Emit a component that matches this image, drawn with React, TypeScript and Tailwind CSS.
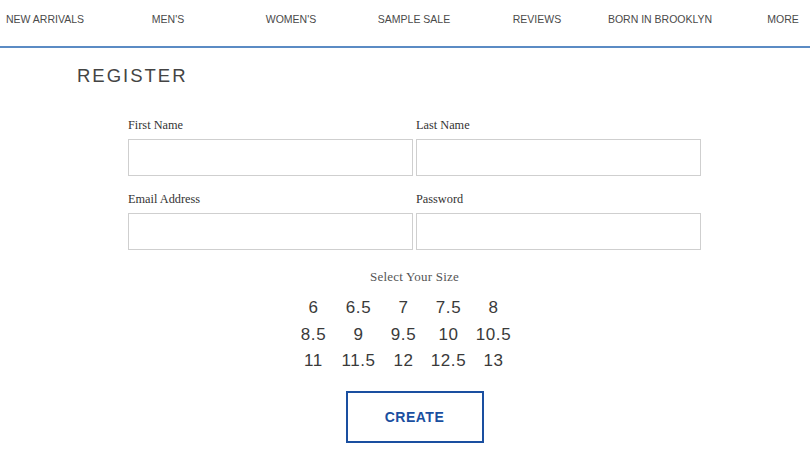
import React from 'react';

const navItems = ['NEW ARRIVALS', "MEN'S", "WOMEN'S", 'SAMPLE SALE', 'REVIEWS', 'BORN IN BROOKLYN', 'MORE'];

const sizes = ['6', '6.5', '7', '7.5', '8', '8.5', '9', '9.5', '10', '10.5', '11', '11.5', '12', '12.5', '13'];

const Field: React.FC<{ label: string; type?: string }> = ({ label, type = 'text' }) => (
  <div className="flex flex-col">
    <label className="font-['Liberation_Serif',serif] text-[12.3px] leading-none text-[#333] h-[12.5px]">{label}</label>
    <input
      type={type}
      className="mt-[8px] w-[285px] h-[37px] border border-[#cfcfcf] bg-white outline-none px-2"
    />
  </div>
);

export default function App() {
  return (
    <div className="w-[810px] h-[450px] bg-white overflow-hidden font-['Liberation_Sans',Arial,sans-serif]">
      <nav className="h-[48px] border-b-2 border-[#5b8bc4] overflow-hidden">
        <div className="grid grid-cols-7 w-[861px] ml-[-16.5px] pt-[12.5px]">
          {navItems.map((item) => (
            <a key={item} href="#" className="text-center text-[10.5px] leading-[12px] text-[#4a4a4a]">
              {item}
            </a>
          ))}
        </div>
      </nav>

      <h1 className="pl-[77px] pt-[19px] text-[18.5px] leading-none tracking-[2px] text-[#444] font-normal">
        REGISTER
      </h1>

      <form className="ml-[128px] w-[573px] mt-[33px]" onSubmit={(e) => e.preventDefault()}>
        <div className="grid grid-cols-2 gap-x-[3px] gap-y-[16.5px]">
          <Field label="First Name" />
          <Field label="Last Name" />
          <Field label="Email Address" type="email" />
          <Field label="Password" type="password" />
        </div>

        <p className="mt-[20px] text-center font-['Liberation_Serif',serif] text-[13px] leading-none tracking-[0.2px] text-[#555]">
          Select Your Size
        </p>

        <div className="ml-[163px] w-[225px] mt-[12px] grid grid-cols-5">
          {sizes.map((s) => (
            <button
              key={s}
              type="button"
              className="text-center text-[17px] leading-[26.5px] tracking-[0.6px] text-[#3a3a3a]"
            >
              {s}
            </button>
          ))}
        </div>

        <button
          type="submit"
          className="block mx-auto mt-[16.5px] w-[138px] h-[52px] border-2 border-[#1a4fa0] text-[#1a4fa0] font-bold text-[14px] tracking-[0.5px]"
        >
          CREATE
        </button>
      </form>
    </div>
  );
}
